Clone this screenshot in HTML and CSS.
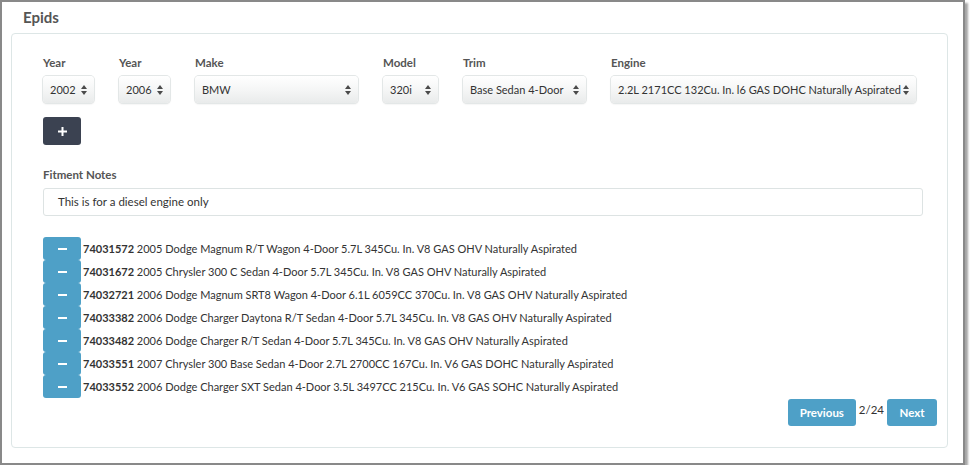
FILE: index.html
```html
<!DOCTYPE html>
<html>
<head>
    <title>Epids</title>
    <link rel="stylesheet" href="styles.css">
</head>
<body>
    <div class="window">
        <h3 class="title">Epids</h3>

        <div class="panel">
            <div class="vehicle-row">
                <div class="field">
                    <label>Year</label>
                    <div class="select w-year"><span>2002</span><svg class="arrows" width="6" height="10" viewBox="0 0 6 10"><path d="M3 0L6 4H0z M3 10L0 6H6z"/></svg></div>
                </div>
                <div class="field">
                    <label>Year</label>
                    <div class="select w-year"><span>2006</span><svg class="arrows" width="6" height="10" viewBox="0 0 6 10"><path d="M3 0L6 4H0z M3 10L0 6H6z"/></svg></div>
                </div>
                <div class="field">
                    <label>Make</label>
                    <div class="select w-make"><span>BMW</span><svg class="arrows" width="6" height="10" viewBox="0 0 6 10"><path d="M3 0L6 4H0z M3 10L0 6H6z"/></svg></div>
                </div>
                <div class="field">
                    <label>Model</label>
                    <div class="select w-model"><span>320i</span><svg class="arrows" width="6" height="10" viewBox="0 0 6 10"><path d="M3 0L6 4H0z M3 10L0 6H6z"/></svg></div>
                </div>
                <div class="field">
                    <label>Trim</label>
                    <div class="select w-trim"><span>Base Sedan 4-Door</span><svg class="arrows" width="6" height="10" viewBox="0 0 6 10"><path d="M3 0L6 4H0z M3 10L0 6H6z"/></svg></div>
                </div>
                <div class="field">
                    <label>Engine</label>
                    <div class="select w-engine"><span>2.2L 2171CC 132Cu. In. l6 GAS DOHC Naturally Aspirated</span><svg class="arrows" width="6" height="10" viewBox="0 0 6 10"><path d="M3 0L6 4H0z M3 10L0 6H6z"/></svg></div>
                </div>
            </div>

            <button class="btn btn-dark">
                <svg width="9" height="9" viewBox="0 0 9 9"><path d="M3.5 0h2v3.5H9v2H5.5V9h-2V5.5H0v-2h3.5z" fill="#fff"/></svg>
            </button>

            <div class="notes">
                <label>Fitment Notes</label>
                <div class="input">This is for a diesel engine only</div>
            </div>

            <ul class="epid-list">
                <li><button class="btn btn-blue btn-minus"><span class="minus"></span></button><b>74031572</b>&nbsp;2005 Dodge Magnum R/T Wagon 4-Door 5.7L 345Cu. In. V8 GAS OHV Naturally Aspirated</li>
                <li><button class="btn btn-blue btn-minus"><span class="minus"></span></button><b>74031672</b>&nbsp;2005 Chrysler 300 C Sedan 4-Door 5.7L 345Cu. In. V8 GAS OHV Naturally Aspirated</li>
                <li><button class="btn btn-blue btn-minus"><span class="minus"></span></button><b>74032721</b>&nbsp;2006 Dodge Magnum SRT8 Wagon 4-Door 6.1L 6059CC 370Cu. In. V8 GAS OHV Naturally Aspirated</li>
                <li><button class="btn btn-blue btn-minus"><span class="minus"></span></button><b>74033382</b>&nbsp;2006 Dodge Charger Daytona R/T Sedan 4-Door 5.7L 345Cu. In. V8 GAS OHV Naturally Aspirated</li>
                <li><button class="btn btn-blue btn-minus"><span class="minus"></span></button><b>74033482</b>&nbsp;2006 Dodge Charger R/T Sedan 4-Door 5.7L 345Cu. In. V8 GAS OHV Naturally Aspirated</li>
                <li><button class="btn btn-blue btn-minus"><span class="minus"></span></button><b>74033551</b>&nbsp;2007 Chrysler 300 Base Sedan 4-Door 2.7L 2700CC 167Cu. In. V6 GAS DOHC Naturally Aspirated</li>
                <li><button class="btn btn-blue btn-minus"><span class="minus"></span></button><b>74033552</b>&nbsp;2006 Dodge Charger SXT Sedan 4-Door 3.5L 3497CC 215Cu. In. V6 GAS SOHC Naturally Aspirated</li>
            </ul>

            <div class="pager">
                <button class="btn btn-blue btn-page">Previous</button>
                <span class="page-count">2/24</span>
                <button class="btn btn-blue btn-page btn-next">Next</button>
            </div>
        </div>
    </div>
</body>
</html>
```

FILE: styles.css
```css
body {
    margin: 0;
    padding: 0;
    background: #fff;
    font-family: Lato, "Open Sans", sans-serif;
    font-size: 11px;
    color: #333;
}

.window {
    width: 937px;
    height: 461px;
    border: 2px solid #898989;
    box-shadow: 3px 3px 2px rgba(0, 0, 0, 0.35);
    background: #fff;
    padding: 0 15px 0 9px;
}

.title {
    margin: 0;
    padding: 6px 0 0 12px;
    height: 25px;
    font-size: 15px;
    font-weight: bold;
    color: #555;
    line-height: 18px;
}

.panel {
    border: 1px solid #dde6e6;
    border-radius: 4px;
    padding: 21px 10px 20px 31px;
    height: 372px;
}

label {
    display: block;
    font-weight: bold;
    color: #555;
    font-size: 11.5px;
    line-height: 16px;
}

.vehicle-row {
    display: flex;
    gap: 25px;
}

.field label {
    margin-bottom: 5px;
}

.select {
    position: relative;
    height: 27px;
    box-sizing: border-box;
    border-radius: 4px;
    background: linear-gradient(#ffffff, #f4f5f5 55%, #e9ebeb);
    box-shadow: 0 0 0 1px #e3e7e7, 0 1px 2px rgba(0, 0, 0, 0.12);
    padding: 0 18px 0 7px;
    line-height: 27px;
    font-size: 11px;
    color: #333;
    white-space: nowrap;
    overflow: hidden;
}

.arrows {
    position: absolute;
    right: 7px;
    top: 9px;
    fill: #4a4a4a;
}

.w-year { width: 51px; }
.w-make { width: 163px; }
.w-model { width: 55px; }
.w-trim { width: 123px; }
.w-engine { width: 305px; }

.btn {
    border: none;
    border-radius: 3px;
    font-family: inherit;
    cursor: pointer;
    padding: 0;
}

.btn-dark {
    display: flex;
    align-items: center;
    justify-content: center;
    width: 38px;
    height: 28px;
    margin-top: 14px;
    background: #3b4251;
}

.btn-blue {
    background: #4ea0c7;
    color: #fff;
}

.notes {
    margin-top: 22px;
    margin-right: 14px;
}

.notes label {
    margin-bottom: 5px;
}

.input {
    height: 28px;
    box-sizing: border-box;
    border: 1px solid #dde3e3;
    border-radius: 3px;
    padding: 0 14px;
    line-height: 26px;
    font-size: 11.5px;
    color: #333;
}

.epid-list {
    list-style: none;
    margin: 21px 0 0;
    padding: 0;
}

.epid-list li {
    display: flex;
    align-items: center;
    height: 23px;
    white-space: nowrap;
}

.epid-list b {
    color: #333;
}

.btn-minus {
    width: 38px;
    height: 23px;
    display: flex;
    align-items: center;
    justify-content: center;
    margin-right: 2px;
}

.minus {
    width: 9px;
    height: 2px;
    background: #fff;
}

.pager {
    display: flex;
    justify-content: flex-end;
    align-items: center;
    gap: 3px;
    margin-top: 1px;
}

.btn-page {
    height: 27px;
    width: 68px;
    font-size: 11.5px;
    font-weight: bold;
}

.btn-next {
    width: 50px;
}

.page-count {
    align-self: flex-start;
    line-height: 22px;
    font-size: 11.5px;
    color: #333;
}
```
